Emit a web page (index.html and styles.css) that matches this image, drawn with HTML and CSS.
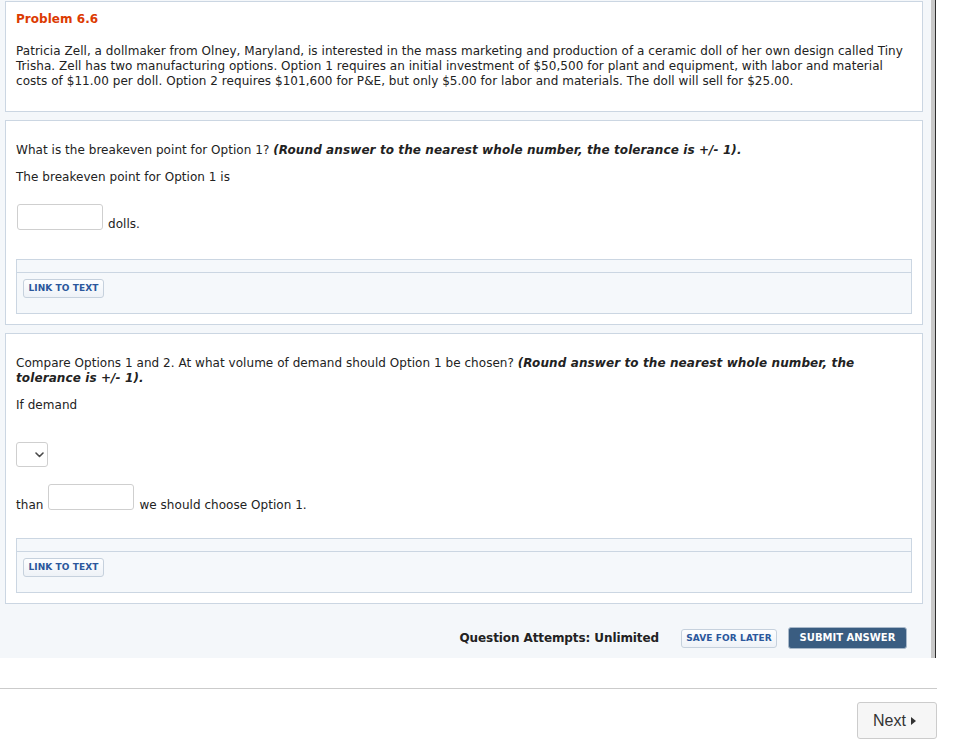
FILE: index.html
```html
<!DOCTYPE html>
<html lang="en">
<head>
<meta charset="utf-8">
<title>Problem 6.6</title>
<link rel="stylesheet" href="styles.css">
</head>
<body>
<div class="page">
  <div class="frame">
    <div class="main">
      <section class="panel intro">
        <h2 class="title">Problem 6.6</h2>
        <p class="para">Patricia Zell, a dollmaker from Olney, Maryland, is interested in the mass marketing and production of a ceramic doll of her own design called Tiny Trisha. Zell has two manufacturing options. Option 1 requires an initial investment of $50,500 for plant and equipment, with labor and material costs of $11.00 per doll. Option 2 requires $101,600 for P&amp;E, but only $5.00 for labor and materials. The doll will sell for $25.00.</p>
      </section>

      <section class="panel question q1">
        <p class="ask">What is the breakeven point for Option 1? <em class="hint">(Round answer to the nearest whole number, the tolerance is +/- 1).</em></p>
        <p class="stmt stmt-1">The breakeven point for Option 1 is</p>
        <div class="answer-row row-dolls">
          <input class="field" type="text" aria-label="Breakeven point">
          <span class="unit">dolls.</span>
        </div>
        <div class="linkbox">
          <div class="linkbox-head"></div>
          <div class="linkbox-body"><button class="btn-link" type="button">LINK TO TEXT</button></div>
        </div>
      </section>

      <section class="panel question q2">
        <p class="ask">Compare Options 1 and 2. At what volume of demand should Option 1 be chosen? <em class="hint">(Round answer to the nearest whole number, the tolerance is +/- 1).</em></p>
        <p class="stmt stmt-2">If demand</p>
        <div class="select-wrap">
          <select class="select" aria-label="Comparison"><option></option><option>greater</option><option>less</option></select>
          <svg class="chev" width="9" height="6" viewBox="0 0 9 6"><path d="M1 1 L4.5 4.5 L8 1" fill="none" stroke="#4a4a4a" stroke-width="1.6" stroke-linecap="round" stroke-linejoin="round"/></svg>
        </div>
        <div class="answer-row row-than">
          <span class="unit">than</span>
          <input class="field" type="text" aria-label="Demand volume">
          <span class="unit">we should choose Option 1.</span>
        </div>
        <div class="linkbox">
          <div class="linkbox-head"></div>
          <div class="linkbox-body"><button class="btn-link" type="button">LINK TO TEXT</button></div>
        </div>
      </section>

      <div class="actions">
        <span class="attempts">Question Attempts: Unlimited</span>
        <button class="btn-link btn-save" type="button">SAVE FOR LATER</button>
        <button class="btn-submit" type="button">SUBMIT ANSWER</button>
      </div>
    </div>
  </div>
  <hr class="sep">
  <div class="nav">
    <button class="btn-next" type="button">Next <svg class="tri" width="5" height="8" viewBox="0 0 5 8"><polygon points="0,0 5,4 0,8" fill="#333"/></svg></button>
  </div>
</div>
</body>
</html>
```

FILE: styles.css
```css
* { box-sizing: border-box; }

body {
  margin: 0;
  background: #fff;
  font-family: "DejaVu Sans", Verdana, sans-serif;
  font-size: 12px;
  line-height: 15px;
  letter-spacing: 0.04px;
  color: #222;
}

.page { width: 937px; }

.frame {
  width: 936px;
  border-right: 1px solid #2e2e2e;
}

.main {
  background: #f4f7fa;
  border-right: 4px solid #c8c8c8;
  padding: 1px 8px 0 5px;
}

.panel {
  background: #fff;
  border: 1px solid #cbd6e2;
}
.panel + .panel { margin-top: 8px; }

.intro { padding: 10px 10px 22px; }

.title {
  margin: 0 0 17px;
  font-size: 12px;
  line-height: 15px;
  font-weight: bold;
  color: #dc3b02;
}

.para { margin: 0; }

.question { padding: 22px 10px 10px; }

.ask { margin: 0 0 12px; }
.hint { font-weight: bold; font-style: italic; letter-spacing: 0.1px; }

.stmt { margin: 0; }
.stmt-1 { margin-bottom: 19px; }
.stmt-2 { margin-bottom: 29px; }

.answer-row {
  display: flex;
  align-items: flex-end;
  gap: 5px;
}
.row-dolls { margin-bottom: 29px; }
.row-dolls .field { margin-left: 1px; }
.row-dolls .unit { margin-bottom: -2px; }
.row-than { margin-top: 17px; margin-bottom: 28px; }
.row-than .unit { margin-bottom: -3px; }

.field {
  width: 86px;
  height: 26px;
  margin: 0;
  border: 1px solid #cfcfcf;
  border-radius: 3px;
  background: #fff;
  font: inherit;
}

.select-wrap {
  position: relative;
  width: 32px;
  height: 25px;
}
.select {
  appearance: none;
  -webkit-appearance: none;
  width: 32px;
  height: 25px;
  margin: 0;
  border: 1px solid #cfcfcf;
  border-radius: 3px;
  background: #fff;
  font: inherit;
}
.chev {
  position: absolute;
  left: 19px;
  top: 10px;
  pointer-events: none;
}

.linkbox {
  border: 1px solid #cbd6e2;
  background: #f5f8fb;
}
.linkbox-head {
  height: 13px;
  border-bottom: 1px solid #cbd6e2;
}
.linkbox-body { padding: 6px 6px 15px; }

.btn-link {
  display: inline-flex;
  align-items: center;
  justify-content: center;
  white-space: nowrap;
  height: 19px;
  padding: 0;
  margin: 0;
  border: 1px solid #c6d1dd;
  border-radius: 3px;
  background: linear-gradient(#fdfeff, #eef2f7);
  color: #2b579c;
  font-family: "DejaVu Sans", Verdana, sans-serif;
  font-size: 9px;
  font-weight: bold;
  line-height: 1;
  letter-spacing: 0.1px;
  width: 81px;
}

.actions {
  display: flex;
  justify-content: flex-end;
  align-items: center;
  padding: 23px 16px 9px 0;
}
.attempts {
  font-weight: bold;
  letter-spacing: -0.1px;
  margin-right: 22px;
}
.btn-save { width: 96px; }
.btn-submit {
  height: 22px;
  width: 119px;
  margin: 0 0 0 11px;
  padding: 0;
  white-space: nowrap;
  border: 1px solid #a9b9ca;
  border-radius: 3px;
  background: #3a5d81;
  color: #fff;
  font-family: "DejaVu Sans", Verdana, sans-serif;
  font-size: 10px;
  font-weight: bold;
  line-height: 1;
}

.sep {
  margin: 30px 0 0;
  height: 1px;
  border: 0;
  background: #cbcbcb;
}

.nav {
  display: flex;
  justify-content: flex-end;
  padding-top: 13px;
}
.btn-next {
  display: inline-flex;
  align-items: center;
  gap: 5px;
  width: 80px;
  height: 37px;
  padding: 0 0 0 15px;
  margin: 0;
  border: 1px solid #cccccc;
  border-radius: 3px;
  background: #f6f6f6;
  color: #333;
  font-family: "Liberation Sans", Arial, sans-serif;
  font-size: 16px;
  letter-spacing: 0;
}
.tri { margin-top: 1px; }
```
